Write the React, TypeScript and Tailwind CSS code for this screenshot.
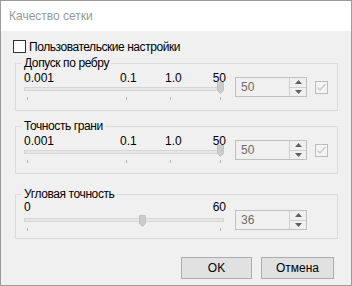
import React from "react";

const FONT = { fontFamily: '"Liberation Sans", Arial, sans-serif' };

function Thumb() {
  return (
    <svg width="7" height="12" viewBox="0 0 7 12" className="block">
      <path d="M0.5 0.5 H6.5 V8.5 L3.5 11.5 L0.5 8.5 Z" fill="#cccccc" stroke="#c2c2c2" strokeWidth="1" />
    </svg>
  );
}

function Spin({ value }: { value: string }) {
  return (
    <div className="flex w-[72px] h-[20px] border border-[#bfbfbf] bg-[#f0f0f0]">
      <div className="flex-1 pl-[5px] leading-[18px] text-[#6d6d6d]">{value}</div>
      <div className="flex w-[17px] flex-col border-l border-[#cfcfcf]">
        <div className="flex flex-1 items-center justify-center border-b border-[#cfcfcf]">
          <svg width="7" height="4" viewBox="0 0 7 4" className="block">
            <path d="M0 4 L3.5 0 L7 4 Z" fill="#606060" />
          </svg>
        </div>
        <div className="flex flex-1 items-center justify-center">
          <svg width="7" height="4" viewBox="0 0 7 4" className="block">
            <path d="M0 0 L3.5 4 L7 0 Z" fill="#606060" />
          </svg>
        </div>
      </div>
    </div>
  );
}

function DisabledCheck() {
  return (
    <div className="flex h-[13px] w-[13px] items-center justify-center border border-[#bcbcbc] bg-[#f4f4f4]">
      <svg width="11" height="11" viewBox="0 0 11 11" className="block">
        <path d="M1.5 5.5 L4 8 L9.5 2" fill="none" stroke="#c6c6c6" strokeWidth="1.2" />
      </svg>
    </div>
  );
}

function Track() {
  return <div className="absolute left-0 w-[200px] h-[4px] border border-[#d6d6d6] bg-[#e7e7e7]" />;
}

function Tick({ x }: { x: number }) {
  return <div className="absolute top-0 h-[3px] w-[1px] bg-[#b5b5b5]" style={{ left: x }} />;
}

function LogGroup({ title, className }: { title: string; className: string }) {
  return (
    <div className={"relative ml-[14px] w-[323px] h-[48px] border border-[#dcdcdc] " + className}>
      <span className="absolute left-[6px] top-[-8px] bg-[#f0f0f0] px-[2px] leading-[14px] tracking-[-0.4px]">{title}</span>
      <div className="flex pl-[8px]">
        <div className="w-[202px]">
          <div className="mt-[7px] flex h-[14px] leading-[14px]">
            <span className="w-[96px]">0.001</span>
            <span className="w-[45px]">0.1</span>
            <span className="flex-1">1.0</span>
            <span>50</span>
          </div>
          <div className="relative mt-[-3px] h-[12px]">
            <div className="absolute top-[5px] left-0">
              <Track />
            </div>
            <div className="absolute top-0 left-[193px]">
              <Thumb />
            </div>
          </div>
          <div className="relative mt-[3px] h-[3px]">
            <Tick x={3} />
            <Tick x={102} />
            <Tick x={146} />
            <Tick x={196} />
          </div>
        </div>
        <div className="ml-[9px] mt-[13px]">
          <Spin value="50" />
        </div>
        <div className="ml-[8px] mt-[17px]">
          <DisabledCheck />
        </div>
      </div>
    </div>
  );
}

export default function App() {
  return (
    <div
      className="flex h-[286px] w-[352px] flex-col border border-[#9b9b9b] bg-[#f0f0f0] text-[12px] text-black"
      style={FONT}
    >
      <div className="flex h-[30px] items-center bg-white pl-[8px] text-[#999999]">Качество сетки</div>
      <div className="flex flex-1 flex-col">
        <div className="mt-[9px] ml-[12px] flex h-[13px] items-center">
          <div className="h-[13px] w-[13px] border border-[#333333] bg-white" />
          <span className="ml-[3px] leading-[14px] tracking-[-0.45px]">Пользовательские настройки</span>
        </div>
        <LogGroup title="Допуск по ребру" className="mt-[10px]" />
        <LogGroup title="Точность грани" className="mt-[15px]" />
        <div className="relative mt-[20px] ml-[14px] w-[323px] h-[45px] border border-[#dcdcdc]">
          <span className="absolute left-[6px] top-[-8px] bg-[#f0f0f0] px-[2px] leading-[14px] tracking-[-0.4px]">Угловая точность</span>
          <div className="flex pl-[8px]">
            <div className="w-[202px]">
              <div className="mt-[5px] flex h-[14px] justify-between leading-[14px]">
                <span>0</span>
                <span>60</span>
              </div>
              <div className="relative mt-[1px] h-[12px]">
                <div className="absolute top-[3px] left-0">
                  <Track />
                </div>
                <div className="absolute top-0 left-[115px]">
                  <Thumb />
                </div>
              </div>
              <div className="relative mt-[1px] h-[3px]">
                <Tick x={3} />
                <Tick x={196} />
              </div>
            </div>
            <div className="ml-[9px] mt-[15px]">
              <Spin value="36" />
            </div>
          </div>
        </div>
        <div className="mt-[18px] flex justify-end gap-[9px] pr-[17px]">
          <button className="h-[22px] w-[71px] border border-[#adadad] bg-[#e1e1e1] text-[12px] font-normal leading-[20px]">OK</button>
          <button className="h-[22px] w-[73px] border border-[#adadad] bg-[#e1e1e1] text-[12px] font-normal leading-[20px]">Отмена</button>
        </div>
      </div>
    </div>
  );
}
